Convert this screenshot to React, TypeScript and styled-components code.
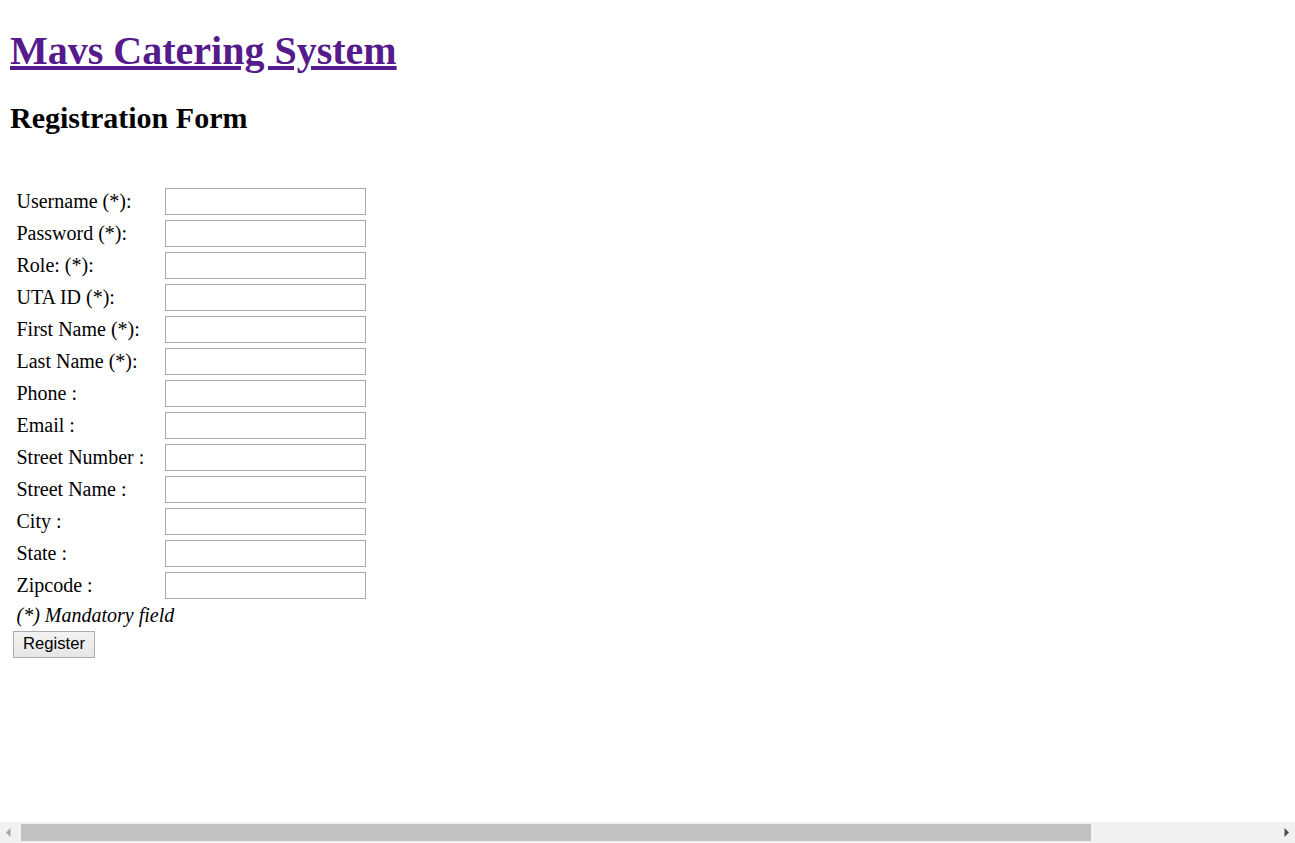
import React from "react";
import styled, { createGlobalStyle } from "styled-components";

const GlobalStyle = createGlobalStyle`
  html, body { background: #ffffff; }
  body {
    margin: 10px;
    font-family: "Liberation Serif", "Times New Roman", serif;
    font-size: 20px;
    color: #000000;
  }
`;

const Page = styled.div``;

const Title = styled.h1`
  margin: 18px 0 0;
  font-size: 40px;
  line-height: 46px;
  font-weight: bold;
`;

const TitleLink = styled.a`
  color: #551a8b;
  text-decoration: underline;
`;

const Subtitle = styled.h2`
  margin: 27px 0 0;
  font-size: 30px;
  line-height: 34px;
  font-weight: bold;
`;

const Form = styled.form`
  margin: 53px 0 0;
  padding-left: 6.5px;
  display: grid;
  grid-template-columns: 148.5px 201px;
  grid-auto-rows: 27px;
  row-gap: 5px;
  align-items: center;
  width: max-content;
`;

const Label = styled.label`
  white-space: nowrap;
  line-height: 23px;
`;

const Field = styled.input`
  box-sizing: border-box;
  width: 201px;
  height: 27px;
  margin: 0;
  padding: 1px 2px;
  border: 1px solid #a9a9a9;
  background: #ffffff;
  font-family: "Liberation Sans", Arial, sans-serif;
  font-size: 16px;
  outline: none;
`;

const Note = styled.div`
  grid-column: 1 / span 2;
  font-style: italic;
  line-height: 23px;
  align-self: start;
`;

const Button = styled.button`
  box-sizing: border-box;
  display: block;
  margin: -11px 0 0 -3.5px;
  height: 27px;
  padding: 0 9px;
  border: 1px solid #adadad;
  border-radius: 0;
  background: linear-gradient(#f3f3f3, #e6e6e6);
  font-family: "Liberation Sans", Arial, sans-serif;
  font-size: 16.67px;
  color: #000000;
  grid-column: 1 / span 2;
  justify-self: start;
`;

const ScrollBar = styled.div`
  position: fixed;
  left: 0;
  right: 0;
  bottom: 0;
  height: 21px;
  background: #f1f1f1;
  display: flex;
  align-items: center;
`;

const Arrow = styled.div`
  flex: 0 0 17px;
  height: 21px;
  display: flex;
  align-items: center;
  justify-content: center;
`;

const Track = styled.div`
  flex: 1;
  height: 17px;
  padding-left: 4px;
`;

const Thumb = styled.div`
  width: 1070px;
  height: 17px;
  background: #c1c1c1;
`;

const fields = [
  { label: "Username (*):", type: "text" },
  { label: "Password (*):", type: "password" },
  { label: "Role: (*):", type: "text" },
  { label: "UTA ID (*):", type: "text" },
  { label: "First Name (*):", type: "text" },
  { label: "Last Name (*):", type: "text" },
  { label: "Phone :", type: "text" },
  { label: "Email :", type: "text" },
  { label: "Street Number :", type: "text" },
  { label: "Street Name :", type: "text" },
  { label: "City :", type: "text" },
  { label: "State :", type: "text" },
  { label: "Zipcode :", type: "text" },
];

export default function App() {
  return (
    <Page>
      <GlobalStyle />
      <Title>
        <TitleLink href="#">Mavs Catering System</TitleLink>
      </Title>
      <Subtitle>Registration Form</Subtitle>
      <Form onSubmit={(e) => e.preventDefault()}>
        {fields.map((f, i) => (
          <React.Fragment key={f.label}>
            <Label htmlFor={`f${i}`}>{f.label}</Label>
            <Field id={`f${i}`} type={f.type} />
          </React.Fragment>
        ))}
        <Note>(*) Mandatory field</Note>
        <Button type="submit">Register</Button>
      </Form>
      <ScrollBar>
        <Arrow>
          <svg width="5" height="9" viewBox="0 0 5 9">
            <path d="M4.5 0 L0 4.5 L4.5 9 Z" fill="#a3a3a3" />
          </svg>
        </Arrow>
        <Track>
          <Thumb />
        </Track>
        <Arrow>
          <svg width="5" height="9" viewBox="0 0 5 9">
            <path d="M0.5 0 L5 4.5 L0.5 9 Z" fill="#505050" />
          </svg>
        </Arrow>
      </ScrollBar>
    </Page>
  );
}
